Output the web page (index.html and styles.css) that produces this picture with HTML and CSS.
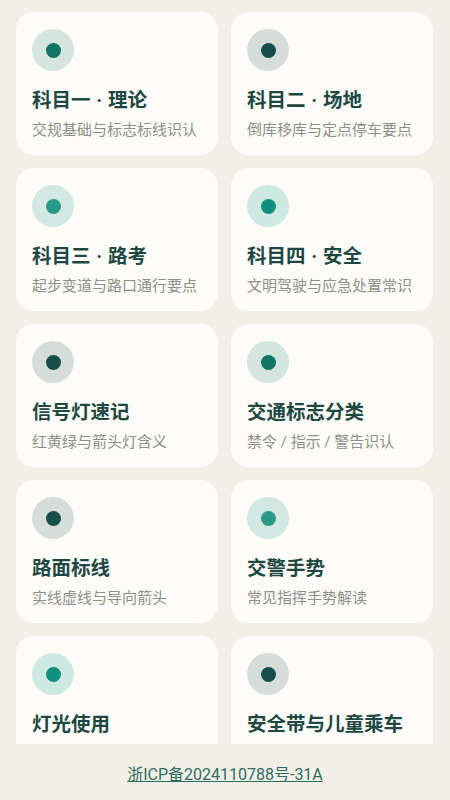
FILE: index.html
```html
<!DOCTYPE html>
<html lang="zh-CN">
<head>
	<meta charset="utf-8" />
	<title>驾考速记</title>
	<link rel="stylesheet" href="styles.css">
</head>
<body>
<div class="page">
	<div class="list">
		<div class="grid">
			<div class="card">
				<div class="dot dot-a"><span></span></div>
				<h3>科目一 · 理论</h3>
				<p>交规基础与标志标线识认</p>
			</div>
			<div class="card">
				<div class="dot dot-b"><span></span></div>
				<h3>科目二 · 场地</h3>
				<p>倒库移库与定点停车要点</p>
			</div>
			<div class="card">
				<div class="dot dot-c"><span></span></div>
				<h3>科目三 · 路考</h3>
				<p>起步变道与路口通行要点</p>
			</div>
			<div class="card">
				<div class="dot dot-d"><span></span></div>
				<h3>科目四 · 安全</h3>
				<p>文明驾驶与应急处置常识</p>
			</div>
			<div class="card">
				<div class="dot dot-b"><span></span></div>
				<h3>信号灯速记</h3>
				<p>红黄绿与箭头灯含义</p>
			</div>
			<div class="card">
				<div class="dot dot-a"><span></span></div>
				<h3>交通标志分类</h3>
				<p>禁令 / 指示 / 警告识认</p>
			</div>
			<div class="card">
				<div class="dot dot-b"><span></span></div>
				<h3>路面标线</h3>
				<p>实线虚线与导向箭头</p>
			</div>
			<div class="card">
				<div class="dot dot-c"><span></span></div>
				<h3>交警手势</h3>
				<p>常见指挥手势解读</p>
			</div>
			<div class="card">
				<div class="dot dot-d"><span></span></div>
				<h3>灯光使用</h3>
			</div>
			<div class="card">
				<div class="dot dot-b"><span></span></div>
				<h3>安全带与儿童乘车</h3>
			</div>
		</div>
	</div>
	<div class="footer">
		<a href="#">浙ICP备2024110788号-31A</a>
	</div>
</div>
</body>
</html>
```

FILE: styles.css
```css
html, body{
	margin: 0;
	padding: 0;
	height: 100%;
}
body{
	background-color: #f2efe7;
	font-family: Roboto, "Noto Sans CJK SC", sans-serif;
	color: #1e4843;
}
.page{
	display: flex;
	flex-direction: column;
	height: 800px;
}
/* zone des cartes */
.list{
	flex: 1;
	overflow: hidden;
	padding: 12px 17px 0 16px;
}
.grid{
	display: grid;
	grid-template-columns: 1fr 1fr;
	gap: 13px;
}
.card{
	background-color: #fdfcf8;
	border-radius: 18px;
	padding: 17px 16px 15px 16px;
	height: 143px;
	box-sizing: border-box;
}
.dot{
	width: 42px;
	height: 42px;
	border-radius: 50%;
	display: flex;
	align-items: center;
	justify-content: center;
	margin-bottom: 17px;
}
.dot span{
	width: 15px;
	height: 15px;
	border-radius: 50%;
}
.dot-a{ background-color: #d4e4df; }
.dot-a span{ background-color: #0f7566; }
.dot-b{ background-color: #d5dcd9; }
.dot-b span{ background-color: #164f48; }
.dot-c{ background-color: #d3e8e2; }
.dot-c span{ background-color: #2a9886; }
.dot-d{ background-color: #cde9e2; }
.dot-d span{ background-color: #10907f; }
.card h3{
	margin: 0;
	font-size: 19.5px;
	line-height: 26px;
	font-weight: bold;
	color: #1e4843;
	white-space: nowrap;
	word-spacing: 1px;
}
.card p{
	margin: 6px 0 0 0;
	font-size: 15px;
	line-height: 20px;
	color: #8f8f89;
	white-space: nowrap;
}
/* pied de page */
.footer{
	height: 56px;
	display: flex;
	align-items: center;
	justify-content: center;
}
.footer a{
	font-size: 16px;
	color: #2e6d64;
	text-decoration: underline;
	padding-top: 2px;
}
```
